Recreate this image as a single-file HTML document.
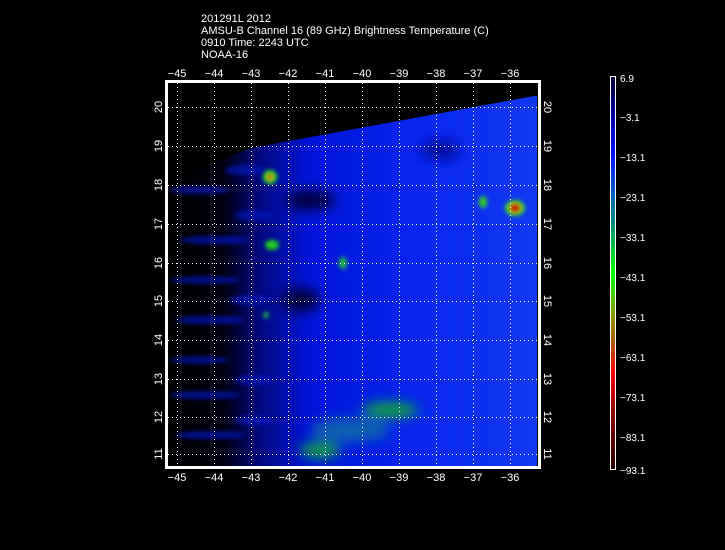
<!DOCTYPE html>
<html><head><style>
html,body{margin:0;padding:0;background:#000;width:725px;height:550px;overflow:hidden}
svg{display:block}
text{font-family:"Liberation Sans",sans-serif;fill:#fff}
</style></head><body>
<svg width="725" height="550" viewBox="0 0 725 550">
<defs>
<filter id="b" x="-50%" y="-50%" width="200%" height="200%"><feGaussianBlur stdDeviation="6"/></filter>
<filter id="b2" x="-50%" y="-50%" width="200%" height="200%"><feGaussianBlur stdDeviation="2"/></filter>
<filter id="b3" x="-50%" y="-50%" width="200%" height="200%"><feGaussianBlur stdDeviation="2"/></filter>
<clipPath id="c"><rect x="168" y="83" width="369" height="383"/></clipPath>
<linearGradient id="bg" x1="168" x2="537" y1="0" y2="0" gradientUnits="userSpaceOnUse">
<stop offset="0" stop-color="#000000"/><stop offset="0.15" stop-color="#000010"/><stop offset="0.25" stop-color="#000880"/><stop offset="0.38" stop-color="#0014d8"/><stop offset="0.7" stop-color="#0828f0"/><stop offset="1" stop-color="#1238f0"/>
</linearGradient>
<linearGradient id="cb" x1="0" x2="0" y1="0" y2="1">
<stop offset="0" stop-color="#000030"/><stop offset="0.1" stop-color="#0000a0"/><stop offset="0.2" stop-color="#0010ff"/><stop offset="0.3" stop-color="#0060c0"/><stop offset="0.4" stop-color="#00a060"/><stop offset="0.5" stop-color="#00ff00"/><stop offset="0.6" stop-color="#80a000"/><stop offset="0.7" stop-color="#c04000"/><stop offset="0.75" stop-color="#ff0000"/><stop offset="0.85" stop-color="#900000"/><stop offset="1" stop-color="#200000"/>
</linearGradient>
</defs>
<text x="201" y="22" font-size="11">201291L 2012</text>
<text x="201" y="34" font-size="11">AMSU-B Channel 16 (89 GHz) Brightness Temperature (C)</text>
<text x="201" y="46" font-size="11">0910 Time: 2243 UTC</text>
<text x="201" y="58" font-size="11">NOAA-16</text>
<g clip-path="url(#c)">
<polygon points="168,180 251,148 540,95 540,466 168,466" fill="url(#bg)"/>
<g filter="url(#b3)" fill="#0018c0" opacity="0.7">
<ellipse cx="200" cy="190" rx="30" ry="4"/>
<ellipse cx="215" cy="240" rx="35" ry="4"/>
<ellipse cx="205" cy="280" rx="35" ry="3.5"/>
<ellipse cx="210" cy="320" rx="35" ry="4"/>
<ellipse cx="200" cy="360" rx="30" ry="3.5"/>
<ellipse cx="205" cy="395" rx="35" ry="4"/>
<ellipse cx="210" cy="435" rx="35" ry="4"/>
<ellipse cx="245" cy="170" rx="20" ry="5"/>
<ellipse cx="250" cy="300" rx="20" ry="5"/>
<ellipse cx="255" cy="215" rx="20" ry="5"/>
<ellipse cx="255" cy="380" rx="20" ry="5"/>
<ellipse cx="255" cy="420" rx="20" ry="5"/>
</g>
<g filter="url(#b)">
<ellipse cx="310" cy="200" rx="25" ry="10" fill="#000040"/>
<ellipse cx="300" cy="300" rx="20" ry="12" fill="#000040"/>
<ellipse cx="440" cy="150" rx="20" ry="10" fill="#0008a0"/>
<ellipse cx="390" cy="410" rx="28" ry="8" fill="#10a040"/>
<ellipse cx="350" cy="430" rx="40" ry="12" fill="#1060b0"/>
<ellipse cx="320" cy="450" rx="20" ry="8" fill="#10a040"/>
</g>
<g filter="url(#b2)">
<ellipse cx="270" cy="177" rx="7" ry="7" fill="#20e020"/>
<ellipse cx="270" cy="177" rx="3" ry="3" fill="#e00000"/>
<ellipse cx="272" cy="245" rx="7" ry="5" fill="#20d020"/>
<ellipse cx="343" cy="263" rx="4" ry="6" fill="#20c040"/>
<ellipse cx="483" cy="202" rx="4" ry="6" fill="#30d020"/>
<ellipse cx="515" cy="208" rx="10" ry="8" fill="#20e020"/>
<ellipse cx="515" cy="208" rx="6" ry="5" fill="#d00000"/>
<ellipse cx="266" cy="315" rx="3" ry="3" fill="#20c040"/>
</g>
<g stroke="#fff" stroke-dasharray="1,3" stroke-width="1">
<path d="M177.5 83V466M214.5 83V466M251.5 83V466M288.5 83V466M325.5 83V466M362.5 83V466M399.5 83V466M436.5 83V466M473.5 83V466M510.5 83V466"/>
<path d="M168 107.5H537M168 146.5H537M168 185.5H537M168 224.5H537M168 263.5H537M168 301.5H537M168 340.5H537M168 379.5H537M168 417.5H537M168 454.5H537"/>
</g>
</g>
<rect x="165.5" y="80.5" width="375" height="388" fill="none" stroke="#fff" stroke-width="1"/>
<rect x="167" y="82" width="372" height="385" fill="none" stroke="#fff" stroke-width="2"/>
<g font-size="11" text-anchor="middle">
<text x="177" y="77">−45</text><text x="214" y="77">−44</text><text x="251" y="77">−43</text><text x="288" y="77">−42</text><text x="325" y="77">−41</text><text x="362" y="77">−40</text><text x="399" y="77">−39</text><text x="436" y="77">−38</text><text x="473" y="77">−37</text><text x="510" y="77">−36</text>
<text x="177" y="481">−45</text><text x="214" y="481">−44</text><text x="251" y="481">−43</text><text x="288" y="481">−42</text><text x="325" y="481">−41</text><text x="362" y="481">−40</text><text x="399" y="481">−39</text><text x="436" y="481">−38</text><text x="473" y="481">−37</text><text x="510" y="481">−36</text>
</g>
<g font-size="11" text-anchor="middle">
<text transform="translate(162,107) rotate(-90)">20</text><text transform="translate(162,146) rotate(-90)">19</text><text transform="translate(162,185) rotate(-90)">18</text><text transform="translate(162,224) rotate(-90)">17</text><text transform="translate(162,263) rotate(-90)">16</text><text transform="translate(162,301) rotate(-90)">15</text><text transform="translate(162,340) rotate(-90)">14</text><text transform="translate(162,379) rotate(-90)">13</text><text transform="translate(162,417) rotate(-90)">12</text><text transform="translate(162,454) rotate(-90)">11</text>
<text transform="translate(544,107) rotate(90)">20</text><text transform="translate(544,146) rotate(90)">19</text><text transform="translate(544,185) rotate(90)">18</text><text transform="translate(544,224) rotate(90)">17</text><text transform="translate(544,263) rotate(90)">16</text><text transform="translate(544,301) rotate(90)">15</text><text transform="translate(544,340) rotate(90)">14</text><text transform="translate(544,379) rotate(90)">13</text><text transform="translate(544,417) rotate(90)">12</text><text transform="translate(544,454) rotate(90)">11</text>
</g>
<rect x="610.5" y="76.5" width="5" height="393" fill="url(#cb)" stroke="#fff" stroke-width="1"/>
<g font-size="10">
<text x="620" y="82">6.9</text><text x="620" y="121">−3.1</text><text x="620" y="161">−13.1</text><text x="620" y="201">−23.1</text><text x="620" y="241">−33.1</text><text x="620" y="281">−43.1</text><text x="620" y="321">−53.1</text><text x="620" y="361">−63.1</text><text x="620" y="401">−73.1</text><text x="620" y="441">−83.1</text><text x="620" y="474">−93.1</text>
</g>
</svg>
</body></html>
